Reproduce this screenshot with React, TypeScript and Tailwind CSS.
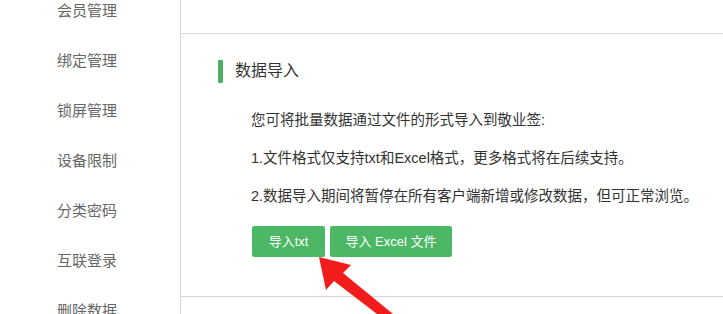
const navItems = ['会员管理', '绑定管理', '锁屏管理', '设备限制', '分类密码', '互联登录', '删除数据'];

const lines = [
  '您可将批量数据通过文件的形式导入到敬业签:',
  '1.文件格式仅支持txt和Excel格式，更多格式将在后续支持。',
  '2.数据导入期间将暂停在所有客户端新增或修改数据，但可正常浏览。',
];

export default function App() {
  return (
    <div
      className="relative w-[723px] h-[314px] overflow-hidden bg-white flex"
      style={{ fontFamily: '"Liberation Sans", "Noto Sans CJK SC", sans-serif' }}
    >
      {/* Sidebar */}
      <aside className="w-[181px] shrink-0 border-r border-[#d4d4d4]">
        <ul className="flex flex-col -mt-[14px]">
          {navItems.map((item) => (
            <li key={item} className="h-[50px] flex items-center pl-[57px] text-[15px] text-[#666]">
              {item}
            </li>
          ))}
        </ul>
      </aside>

      {/* Main */}
      <main className="flex-1 flex flex-col">
        <div className="h-[34px] shrink-0 border-b border-[#d8d8d8]" />
        <section className="h-[263px] shrink-0 border-b border-[#d8d8d8] pl-[37px] pt-[25px]">
          <div className="flex items-center h-[24px]">
            <span className="w-[5px] h-[23px] bg-[#4caf64] rounded-[1px]" />
            <h2 className="ml-[12px] text-[16px] text-[#333]">数据导入</h2>
          </div>
          <div className="pl-[33px] pt-[18px] text-[14.5px] text-[#333] flex flex-col">
            {lines.map((line) => (
              <p key={line} className="h-[38px] leading-[38px] whitespace-nowrap">
                {line}
              </p>
            ))}
          </div>
          <div className="flex gap-[5px] pl-[34px] mt-[11px]">
            <button className="w-[73px] h-[31px] bg-[#4cb866] text-white text-[13px] rounded-[2px]">导入txt</button>
            <button className="w-[122px] h-[31px] bg-[#4cb866] text-white text-[13px] rounded-[2px]">导入 Excel 文件</button>
          </div>
        </section>
      </main>

      {/* Red annotation arrow */}
      <svg className="absolute left-0 top-0" width="723" height="314" viewBox="0 0 723 314">
        <polygon
          points="319,257 351,265 343,273 393,314 377,314 334,281 326,290"
          fill="#f21c1c"
        />
      </svg>
    </div>
  );
}
